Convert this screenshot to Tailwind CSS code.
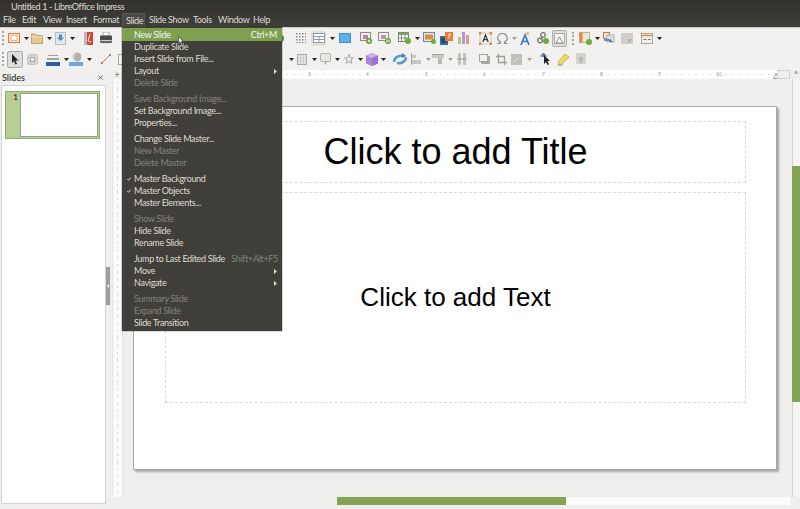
<!DOCTYPE html>
<html lang="en">
<head>
  <meta charset="UTF-8" />
  <title>Untitled 1 - LibreOffice Impress</title>
  <script src="https://cdn.jsdelivr.net/npm/@tailwindcss/browser@4"></script>
</head>
<body class="w-[800px] h-[509px] overflow-hidden relative bg-[#f0efed] font-['Lato',sans-serif]">

  <!-- title bar + menu bar -->
  <header class="h-[27px] bg-gradient-to-b from-[#32312d] to-[#3f3e39] text-[#dfdbd2] tracking-[-0.35px]">
    <div class="h-[13px] pl-[11px] text-[9px] leading-[13px] whitespace-nowrap">Untitled 1 - LibreOffice Impress</div>
    <nav class="relative h-[14px] text-[9px] leading-[13px] whitespace-nowrap">
      <span class="absolute left-[3px]">File</span>
      <span class="absolute left-[22px]">Edit</span>
      <span class="absolute left-[43px]">View</span>
      <span class="absolute left-[66px]">Insert</span>
      <span class="absolute left-[93px]">Format</span>
      <span class="absolute left-[122px] w-[23px] h-[14px] pl-[3px] bg-[#4a4943] border-x border-t border-[#57564f]">Slide</span>
      <span class="absolute left-[149px]">Slide Show</span>
      <span class="absolute left-[193px]">Tools</span>
      <span class="absolute left-[218px]">Window</span>
      <span class="absolute left-[253px]">Help</span>
    </nav>
  </header>

  <!-- toolbars -->
  <div class="h-[43px] bg-[#f2f1f0] border-t border-[#cfcdc9]">
    <div class="h-[20px] flex items-center">
      <div class="ml-[2px] w-[2px] h-[14px] border-l-2 border-dotted border-[#a9a7a2]"></div>
      <svg class="ml-[4px]" width="12" height="12" viewBox="0 0 12 12"><rect x=".5" y="1.5" width="11" height="9" fill="#fbe3cf" stroke="#e07b39"/><rect x="3" y="3.5" width="6" height="5" fill="#fff" stroke="#e59a66" stroke-width=".7"/></svg>
      <svg class="ml-[4px]" width="5" height="3" viewBox="0 0 5 3"><path d="M0 0h5L2.5 3z" fill="#222"/></svg>
      <svg class="ml-[2px]" width="12" height="11" viewBox="0 0 12 11"><path d="M.5 2.5V1h4l1 1.5h6v8H.5z" fill="#e3c892" stroke="#bda274"/><path d="M.5 4h11" stroke="#f3e4c3"/></svg>
      <svg class="ml-[4px]" width="5" height="3" viewBox="0 0 5 3"><path d="M0 0h5L2.5 3z" fill="#222"/></svg>
      <svg class="ml-[3px]" width="11" height="13" viewBox="0 0 11 13"><rect x=".5" y=".5" width="10" height="12" fill="#e6e6e6" stroke="#bdbdbd"/><path d="M4 2.5h3v3h2L5.500 9 2 5.500h2z" fill="#3f8fd8"/></svg>
      <svg class="ml-[4px]" width="5" height="3" viewBox="0 0 5 3"><path d="M0 0h5L2.5 3z" fill="#222"/></svg>
      <svg class="ml-[9px]" width="9" height="13" viewBox="0 0 9 13"><rect width="9" height="13" fill="#d9443a"/><path d="M0 0h3v13H0z" fill="#b9b9b9"/><path d="M6 2 4 9l3 1" stroke="#fff" fill="none"/></svg>
      <svg class="ml-[7px]" width="12" height="12" viewBox="0 0 12 12"><rect x="3" y="0" width="6" height="4" fill="#fff" stroke="#777" stroke-width=".6"/><rect x="0" y="3.500" width="12" height="5" rx="1" fill="#4a4a4a"/><rect x="2" y="8" width="8" height="3.500" fill="#d5d5d5"/><rect x="0" y="9" width="12" height="2" fill="#333" opacity=".7"/></svg>

      <svg class="ml-[169px]" width="3" height="9" viewBox="0 0 3 9"><path d="M0 0c4 2 4 7 0 9z" fill="#4d8a3a"/></svg>
      <svg class="ml-[12px]" width="10" height="10" viewBox="0 0 10 10"><defs><pattern id="dots" width="3" height="3" patternUnits="userSpaceOnUse"><rect width="1.500" height="1.500" fill="#8b8882"/></pattern></defs><rect width="10" height="10" fill="url(#dots)"/></svg>
      <div class="ml-[5px] w-[15px] h-[15px] bg-[#e0dfdc] rounded-[2px] flex items-center justify-center">
        <svg width="12" height="10" viewBox="0 0 12 10"><rect x=".5" y=".5" width="11" height="9" fill="#fff" stroke="#9a9a96"/><path d="M.5 3.500h11" stroke="#6f9fd4"/><path d="M.5 6.500h11M6 3.500v6" stroke="#9a9a96"/></svg>
      </div>
      <svg class="ml-[4px]" width="5" height="3" viewBox="0 0 5 3"><path d="M0 0h5L2.5 3z" fill="#222"/></svg>
      <svg class="ml-[4px]" width="12" height="10" viewBox="0 0 12 10"><rect width="12" height="10" fill="#3a8fd8"/><rect x="1" y="1" width="10" height="8" fill="#5fb0ea"/></svg>
      <svg class="ml-[9px]" width="12" height="12" viewBox="0 0 12 12"><rect x=".5" y=".5" width="10" height="8" fill="#f2f1ef" stroke="#8e8c87"/><rect x="3" y="3" width="5" height="4" fill="#c57bb5"/><circle cx="9" cy="9" r="3" fill="#5aa02c"/><path d="M7.500 9h3M9 7.500v3" stroke="#fff"/></svg>
      <svg class="ml-[6px]" width="13" height="12" viewBox="0 0 13 12"><rect x=".5" y=".5" width="10" height="8" fill="#f2f1ef" stroke="#8e8c87"/><rect x="3" y="3" width="5" height="4" fill="#d08ac0"/><circle cx="10" cy="9" r="3" fill="#5aa02c"/><path d="M9 7.500v3M11 7.500v3" stroke="#fff"/></svg>
      <svg class="ml-[7px]" width="13" height="12" viewBox="0 0 13 12"><rect x=".5" y=".5" width="10" height="9" fill="#fff" stroke="#7d7b76"/><path d="M.5 .5h10v2.500H.5z" fill="#7fa65a"/><path d="M3.500 3v6M7 3v6M.5 6h10" stroke="#8e8c87"/><circle cx="10" cy="9" r="3" fill="#6cae3c"/></svg>
      <svg class="ml-[4px]" width="5" height="3" viewBox="0 0 5 3"><path d="M0 0h5L2.5 3z" fill="#222"/></svg>
      <svg class="ml-[3px]" width="13" height="12" viewBox="0 0 13 12"><rect x=".5" y=".5" width="11" height="9" fill="#e6e5e2" stroke="#5b8fc0"/><rect x="2" y="2.500" width="8" height="5" fill="#e8893a"/><circle cx="10.500" cy="9.500" r="2.500" fill="#6cae3c"/></svg>
      <svg class="ml-[4px]" width="13" height="13" viewBox="0 0 13 13"><rect x="0" y="4" width="8" height="9" fill="#2f6ea5"/><rect x="1.500" y="6" width="5" height="5" fill="#1e4b73"/><rect x="5" y="0" width="8" height="9" fill="#ed7d2c"/><path d="M9 2v4.500M9 2l2 .7" stroke="#fff" fill="none"/></svg>
      <svg class="ml-[5px]" width="11" height="12" viewBox="0 0 11 12"><rect x="0" y="5" width="3" height="7" fill="#a5cf72"/><rect x="4" y="0" width="3" height="12" fill="#b594cf"/><rect x="8" y="3" width="3" height="9" fill="#e8948a"/></svg>
      <svg class="ml-[10px]" width="13" height="13" viewBox="0 0 13 13"><rect x="1" y="1" width="11" height="11" fill="#f4f3f1" stroke="#c9c7c2"/><rect width="2.500" height="2.500" fill="#e08a4a"/><rect x="10.500" width="2.500" height="2.500" fill="#e08a4a"/><rect y="10.500" width="2.500" height="2.500" fill="#e08a4a"/><rect x="10.500" y="10.500" width="2.500" height="2.500" fill="#e08a4a"/><path d="M3.800 10 6.500 3l2.700 7M4.800 7.700h3.400" stroke="#3a3a3a" stroke-width="1.300" fill="none"/></svg>
      <svg class="ml-[5px]" width="11" height="11" viewBox="0 0 11 11"><path d="M.5 10.500h3V9C1.500 8 .8 6.500.8 5a4.700 4.700 0 0 1 9.400 0c0 1.500-.7 3-2.700 4v1.500h3" fill="none" stroke="#8f9295" stroke-width="1.300"/></svg>
      <svg class="ml-[4px]" width="5" height="3" viewBox="0 0 5 3"><path d="M0 0h5L2.5 3z" fill="#a09e99"/></svg>
      <svg class="ml-[3px]" width="10" height="13" viewBox="0 0 10 13"><path d="M1 13 5 3l4 10M2.500 9.500h5" stroke="#2f7fc8" stroke-width="1.700" fill="none"/><circle cx="7.500" cy="1.500" r="1.500" fill="#e8b53c"/></svg>
      <svg class="ml-[7px]" width="12" height="12" viewBox="0 0 12 12"><circle cx="3" cy="8.500" r="2.300" fill="none" stroke="#77746e" stroke-width="1.300"/><circle cx="6" cy="3" r="2.300" fill="none" stroke="#77746e" stroke-width="1.300"/><path d="M3.500 7.500 5.500 4" stroke="#77746e"/><circle cx="9" cy="9" r="3" fill="#6cae3c"/></svg>
      <div class="ml-[3px] w-[15px] h-[17px] bg-[#dedddb] border border-[#b2b0ab] rounded-[2px] flex items-center justify-center">
        <svg width="11" height="11" viewBox="0 0 11 11"><rect x=".5" y=".5" width="10" height="10" fill="#f5f4f2" stroke="#aeaca8"/><path d="M2 10 5.500 4 9 10z" fill="#fff" stroke="#8e8c87"/></svg>
      </div>
      <div class="ml-[5px] w-[1px] h-[13px] border-l-2 border-dotted border-[#a9a7a2]"></div>
      <svg class="ml-[5px]" width="13" height="13" viewBox="0 0 13 13"><rect x=".5" y=".5" width="10" height="10" fill="#f2e4d4" stroke="#b5b3ae"/><rect x=".5" y=".5" width="3" height="10" fill="#e8893a"/><circle cx="10" cy="10" r="3" fill="#6cae3c"/></svg>
      <svg class="ml-[3px]" width="5" height="3" viewBox="0 0 5 3"><path d="M0 0h5L2.5 3z" fill="#222"/></svg>
      <svg class="ml-[3px]" width="12" height="12" viewBox="0 0 12 12"><rect x=".5" y=".5" width="6" height="6" fill="#e8e7e4" stroke="#c77a3a"/><rect x="4" y="3" width="7" height="7" fill="#dddcd9" stroke="#b5b3ae"/><path d="M1 8h6v2M7 8 9 10" stroke="#2f7fc8" stroke-width="1.300" fill="none"/></svg>
      <svg class="ml-[6px]" width="12" height="11" viewBox="0 0 12 11"><rect width="12" height="11" fill="#cfcecb"/><path d="m7 6 3 3m0-3L7 9" stroke="#99978f"/></svg>
      <svg class="ml-[8px]" width="12" height="11" viewBox="0 0 12 11"><rect x=".5" y=".5" width="11" height="10" fill="#efeeec" stroke="#a9a7a2"/><path d="M.5 2.500h11" stroke="#e8893a" stroke-width="1.500"/><path d="M2.500 6.500h3M7 6.500h2.500" stroke="#77746e"/></svg>
      <svg class="ml-[4px]" width="5" height="3" viewBox="0 0 5 3"><path d="M0 0h5L2.5 3z" fill="#222"/></svg>
    </div>
    <div class="h-[22px] flex items-center">
      <div class="ml-[2px] w-[2px] h-[14px] border-l-2 border-dotted border-[#a9a7a2]"></div>
      <div class="ml-[3px] w-[16px] h-[17px] bg-[#dedddb] border border-[#aeaca7] rounded-[2px] flex items-center justify-center">
        <svg width="8" height="11" viewBox="0 0 8 11"><path d="M1 0v9l2-2 1.500 3.500 1.500-.7L4.500 6.500H7.500z" fill="#222"/></svg>
      </div>
      <svg class="ml-[4px]" width="11" height="11" viewBox="0 0 11 11"><rect x=".5" y=".5" width="10" height="10" rx="2" fill="#d5d4d1" stroke="#c6c4c0"/><rect x="3.500" y="3.500" width="4" height="4" fill="#f2f1f0" stroke="#aaa8a3"/></svg>
      <svg class="ml-[8px]" width="14" height="13" viewBox="0 0 14 13"><path d="M2 2h10v1H2zM1 5h12V7H1z" fill="#a3a19c"/><rect y="9" width="14" height="4" fill="#2d5fa5"/></svg>
      <svg class="ml-[4px]" width="5" height="3" viewBox="0 0 5 3"><path d="M0 0h5L2.5 3z" fill="#222"/></svg>
      <svg class="ml-[0px]" width="14" height="14" viewBox="0 0 14 14"><circle cx="8" cy="5" r="4.500" fill="#b4b2ad"/><path d="M6 1C4 5 4 7 6 9" stroke="#eee" fill="none"/><rect y="10" width="14" height="4" fill="#6ea3dc"/></svg>
      <svg class="ml-[4px]" width="5" height="3" viewBox="0 0 5 3"><path d="M0 0h5L2.5 3z" fill="#222"/></svg>
      <svg class="ml-[9px]" width="10" height="10" viewBox="0 0 10 10"><path d="M.5 9.500 9.500.5" stroke="#e0762f" stroke-width="1"/><circle cx="1" cy="9" r="1" fill="#777"/><circle cx="9" cy="1" r="1" fill="#777"/></svg>
      <div class="ml-[7px] w-[6px] h-[11px] bg-[#f6f5f4] border border-[#a9a7a2]"></div>

      <svg class="ml-[165px]" width="5" height="3" viewBox="0 0 5 3"><path d="M0 0h5L2.5 3z" fill="#222"/></svg>
      <svg class="ml-[3px]" width="10" height="11" viewBox="0 0 10 11"><rect x=".5" y=".5" width="9" height="10" fill="#e9e8e5" stroke="#a9a7a2"/><path d="M3.500 .5v10M6.500 .5v10M.5 4h9M.5 7h9" stroke="#c4c2bd" stroke-width=".7"/></svg>
      <svg class="ml-[5px]" width="5" height="3" viewBox="0 0 5 3"><path d="M0 0h5L2.5 3z" fill="#222"/></svg>
      <svg class="ml-[3px]" width="11" height="12" viewBox="0 0 11 12"><rect x=".5" y=".5" width="10" height="8" rx="1" fill="#e8e7e4" stroke="#b5b3ae"/><path d="M5.500 8.500v3" stroke="#a9a7a2" stroke-width="1.500"/></svg>
      <svg class="ml-[4px]" width="5" height="3" viewBox="0 0 5 3"><path d="M0 0h5L2.5 3z" fill="#222"/></svg>
      <svg class="ml-[4px]" width="10" height="10" viewBox="0 0 10 10"><path d="M5 .5 6.300 3.700l3.200.2-2.500 2 .9 3.500L5 7.500 2.100 9.400 3 5.900.5 3.900l3.200-.2z" fill="#ecebe8" stroke="#a9a7a2"/></svg>
      <svg class="ml-[4px]" width="5" height="3" viewBox="0 0 5 3"><path d="M0 0h5L2.5 3z" fill="#222"/></svg>
      <svg class="ml-[3px]" width="12" height="13" viewBox="0 0 12 13"><path d="M6 0l6 2.500v8L6 13 0 10.500v-8z" fill="#a684d8"/><path d="M6 0l6 2.500L6 5 0 2.500z" fill="#c9b0ec"/><path d="M6 5l6-2.500v8L6 13z" fill="#9773cf"/></svg>
      <svg class="ml-[3px]" width="5" height="3" viewBox="0 0 5 3"><path d="M0 0h5L2.500 3z" fill="#222"/></svg>
      <svg class="ml-[7px]" width="14" height="13" viewBox="0 0 14 13"><path d="M1 9C1 5 5 2 10 3" stroke="#5a98d8" stroke-width="2.500" fill="none"/><path d="M13 4c0 4-4 7-9 6" stroke="#5a98d8" stroke-width="2.500" fill="none"/><path d="M9 0l4 3-4 2z" fill="#3b78b8"/></svg>
      <svg class="ml-[4px]" width="10" height="12" viewBox="0 0 10 12"><path d="M.5 0v12" stroke="#a9a7a2"/><rect x="1" y="2" width="4" height="3" fill="#c9c7c2"/><rect x="1" y="7" width="9" height="4" fill="#c9c7c2"/></svg>
      <svg class="ml-[5px]" width="5" height="3" viewBox="0 0 5 3"><path d="M0 0h5L2.500 3z" fill="#a09e99"/></svg>
      <svg class="ml-[1px]" width="12" height="11" viewBox="0 0 12 11"><path d="M0 .5h12" stroke="#a9a7a2"/><rect x="0" y="1" width="12" height="3" fill="#c9c7c2"/><rect x="6" y="4" width="4" height="6" fill="#b9b7b2"/></svg>
      <svg class="ml-[4px]" width="5" height="3" viewBox="0 0 5 3"><path d="M0 0h5L2.500 3z" fill="#a09e99"/></svg>
      <svg class="ml-[4px]" width="10" height="12" viewBox="0 0 10 12"><rect x="1" y="0" width="3" height="12" rx="1" fill="#c2c0bb"/><rect x="6" y="0" width="3" height="12" rx="1" fill="#c2c0bb"/><path d="M0 6h10" stroke="#a09e99"/></svg>
      <svg class="ml-[12px]" width="11" height="10" viewBox="0 0 11 10"><rect x="2" y="2" width="9" height="8" rx="1" fill="#a9a7a2"/><rect x=".5" y=".5" width="8" height="7" fill="#f2f1f0" stroke="#a9a7a2"/></svg>
      <svg class="ml-[6px]" width="11" height="11" viewBox="0 0 11 11"><path d="M2.500 0v8.500H11M0 2.500h8.500V11" stroke="#a09e99" stroke-width="1.300" fill="none"/></svg>
      <svg class="ml-[4px]" width="13" height="11" viewBox="0 0 13 11"><rect width="11" height="11" fill="#c2c0bb"/><path d="m2 9 6-6" stroke="#dedcd8"/></svg>
      <svg class="ml-[3px]" width="5" height="3" viewBox="0 0 5 3"><path d="M0 0h5L2.500 3z" fill="#a09e99"/></svg>
      <svg class="ml-[8px]" width="11" height="12" viewBox="0 0 11 12"><circle cx="3.500" cy="2" r="2" fill="#3b82c8"/><path d="M0 3h7" stroke="#777"/><path d="M4 2v9l2-2 1.500 3 1.500-.7L7.500 8H10z" fill="#222"/></svg>
      <svg class="ml-[6px]" width="13" height="13" viewBox="0 0 13 13"><path d="M8 1l4 3-7 7-4 1 1-4z" fill="#f0db62" stroke="#bfa52e" stroke-width=".7"/><path d="M1 12h5" stroke="#999"/></svg>
      <svg class="ml-[6px]" width="10" height="12" viewBox="0 0 10 12"><rect width="10" height="11" fill="#d4d3d0"/><path d="M5 3 8 6.500H6.300V10H3.700V6.500H2z" fill="#b5b3ae"/></svg>
    </div>
  </div>

  <main class="flex h-[439px]">
    <!-- slide pane -->
    <aside class="w-[106px] shrink-0 flex flex-col">
      <div class="h-[15px] flex items-center justify-between pl-[2px] pr-[3px] text-[9px] font-semibold text-[#3c3b37]">
        <span>Slides</span>
        <svg width="5" height="5" viewBox="0 0 5 5"><path d="m.5.5 4 4m0-4-4 4" stroke="#555" stroke-width=".9"/></svg>
      </div>
      <div class="h-[419px] ml-[1px] bg-white border border-[#d5d3cf] pt-[5px] pl-[3px]">
        <div class="w-[95px] h-[48px] bg-[#b7cf95] border border-[#8fae68] flex relative">
          <span class="w-[14px] pr-[2px] text-right text-[8px] leading-[11px] font-bold text-[#3c3b37]">1</span>
          <div class="mt-[1px] w-[78px] h-[44px] bg-white border border-[#9a9994]"></div>
        </div>
      </div>
    </aside>

    <!-- splitter -->
    <div class="w-[5px] shrink-0 pt-[197px]">
      <div class="w-[4px] h-[38px] bg-[#a09e99] flex items-center justify-center">
        <svg width="2" height="4" viewBox="0 0 2 4"><path d="M2 0v4L0 2z" fill="#fff"/></svg>
      </div>
    </div>

    <div class="flex-1 flex flex-col">
      <!-- horizontal ruler -->
      <div class="h-[9px] flex shrink-0">
        <div class="ml-[1px] w-[10px] h-[9px] flex items-center justify-center text-[9px] leading-[9px] text-[#6a6862]">+</div>
        <div class="w-[655px] h-[9px] bg-white relative overflow-hidden">
          <svg class="w-full h-full" viewBox="0 0 655 9"><defs><pattern id="hticks" width="7.300" height="9" patternUnits="userSpaceOnUse" x="4"><rect y="4" width="1" height="1" fill="#c8c6c1"/></pattern></defs><rect width="655" height="9" fill="url(#hticks)"/></svg>
          <span class="absolute left-[186px] top-0 text-[5px] leading-[9px] text-[#a09e99]">3</span>
          <span class="absolute left-[244px] top-0 text-[5px] leading-[9px] text-[#a09e99]">4</span>
          <span class="absolute left-[303px] top-0 text-[5px] leading-[9px] text-[#a09e99]">5</span>
          <span class="absolute left-[361px] top-0 text-[5px] leading-[9px] text-[#a09e99]">6</span>
          <span class="absolute left-[420px] top-0 text-[5px] leading-[9px] text-[#a09e99]">7</span>
          <span class="absolute left-[478px] top-0 text-[5px] leading-[9px] text-[#a09e99]">8</span>
          <span class="absolute left-[536px] top-0 text-[5px] leading-[9px] text-[#a09e99]">9</span>
          <span class="absolute left-[594px] top-0 text-[5px] leading-[9px] text-[#a09e99]">10</span>
          <svg class="absolute left-[651px] top-[3px]" width="6" height="6" viewBox="0 0 6 6"><path d="M3 .5 5.500 5.500H.5z" fill="#fff" stroke="#a09e99"/></svg>
        </div>
        <div class="w-[13px] h-[9px] border border-[#d5d3cf]"></div>
        <div class="ml-[2px] w-[8px] text-center text-[7px] leading-[8px] text-[#555]">^</div>
      </div>

      <div class="flex-1 flex min-h-0">
        <!-- vertical ruler -->
        <div class="w-[11px] ml-[1px] h-[418px] bg-white/70 border-x border-[#e6e4e0]">
          <svg class="w-full h-full" viewBox="0 0 9 418"><defs><pattern id="vticks" width="9" height="7.300" patternUnits="userSpaceOnUse"><rect x="4" y="3" width="1" height="1" fill="#b0aea9"/></pattern></defs><rect width="9" height="418" fill="url(#vticks)"/></svg>
        </div>

        <!-- work area -->
        <div class="w-[669px] h-[418px] pt-[27px] pl-[10px]">
          <div class="w-[644px] h-[364px] bg-white border border-[#aaa8a3] shadow-[2px_2px_2px_#a9a7a2] pt-[14px] pl-[31px]">
            <div class="w-[581px] h-[62px] border border-dashed border-[#d9d8d6] flex items-center justify-center text-[36px] text-black font-['Liberation_Sans',sans-serif] whitespace-nowrap">Click to add Title</div>
            <div class="mt-[9px] w-[581px] h-[211px] border border-dashed border-[#d9d8d6] flex items-center justify-center text-[26px] text-black font-['Liberation_Sans',sans-serif] whitespace-nowrap">Click to add Text</div>
          </div>
        </div>

        <!-- right scrollbar -->
        <div class="w-[8px] h-[418px] shrink-0 bg-[#f5f4f2] border-l border-[#d5d3cf] pt-[87px]">
          <div class="w-[8px] ml-[-1px] h-[236px] bg-[#84a354]"></div>
        </div>
      </div>

      <!-- bottom scrollbar -->
      <div class="h-[12px] shrink-0 ml-[12px] mr-[10px] pl-[214px]">
        <div class="h-[8px] bg-white/80">
          <div class="w-[229px] h-[8px] bg-[#84a354]"></div>
        </div>
      </div>
    </div>
  </main>

  <!-- open Slide menu -->
  <div class="absolute left-[122px] top-[27px] w-[160px] h-[304px] bg-[#413f39] shadow-[0_0_1px_#222] text-[9px] leading-[12px] tracking-[-0.32px] text-[#dfdbd2] pt-[2px] whitespace-nowrap">
    <div class="mt-[-1px] h-[13px] leading-[14px] pl-[12px] pr-[5px] flex justify-between bg-[#7f9f50] text-white/90"><span>New Slide</span><span>Ctrl+M</span></div>
    <div class="pl-[12px]">Duplicate Slide</div>
    <div class="pl-[12px]">Insert Slide from File...</div>
    <div class="pl-[12px] pr-[5px] flex justify-between items-center"><span>Layout</span><svg width="3" height="5" viewBox="0 0 3 5"><path d="M0 0l3 2.500L0 5z" fill="#dfdbd2"/></svg></div>
    <div class="pl-[12px] text-[#85837c]">Delete Slide</div>
    <div class="mt-[4px] pl-[12px] text-[#85837c]">Save Background Image...</div>
    <div class="pl-[12px]">Set Background Image...</div>
    <div class="pl-[12px]">Properties...</div>
    <div class="mt-[4px] pl-[12px]">Change Slide Master...</div>
    <div class="pl-[12px] text-[#85837c]">New Master</div>
    <div class="pl-[12px] text-[#85837c]">Delete Master</div>
    <div class="mt-[4px] pl-[5px] flex items-center"><svg class="mr-[3px]" width="4" height="4" viewBox="0 0 4 4"><path d="M.3 2 1.500 3.300 3.700.6" stroke="#dfdbd2" fill="none"/></svg>Master Background</div>
    <div class="pl-[5px] flex items-center"><svg class="mr-[3px]" width="4" height="4" viewBox="0 0 4 4"><path d="M.3 2 1.500 3.300 3.700.6" stroke="#dfdbd2" fill="none"/></svg>Master Objects</div>
    <div class="pl-[12px]">Master Elements...</div>
    <div class="mt-[4px] pl-[12px] text-[#85837c]">Show Slide</div>
    <div class="pl-[12px]">Hide Slide</div>
    <div class="pl-[12px]">Rename Slide</div>
    <div class="mt-[4px] pl-[12px] pr-[4px] flex justify-between"><span>Jump to Last Edited Slide</span><span class="text-[#85837c]">Shift+Alt+F5</span></div>
    <div class="pl-[12px] pr-[5px] flex justify-between items-center"><span>Move</span><svg width="3" height="5" viewBox="0 0 3 5"><path d="M0 0l3 2.500L0 5z" fill="#dfdbd2"/></svg></div>
    <div class="pl-[12px] pr-[5px] flex justify-between items-center"><span>Navigate</span><svg width="3" height="5" viewBox="0 0 3 5"><path d="M0 0l3 2.500L0 5z" fill="#dfdbd2"/></svg></div>
    <div class="mt-[4px] pl-[12px] text-[#85837c]">Summary Slide</div>
    <div class="pl-[12px] text-[#85837c]">Expand Slide</div>
    <div class="pl-[12px]">Slide Transition</div>
  </div>

  <!-- mouse pointer -->
  <svg class="absolute left-[178px] top-[36px]" width="6" height="9" viewBox="0 0 6 9"><path d="M.5.500v7l1.500-1.500 1 2.500 1.300-.5-1-2.500H5.500z" fill="#eee" stroke="#333" stroke-width=".6"/></svg>
</body>
</html>
